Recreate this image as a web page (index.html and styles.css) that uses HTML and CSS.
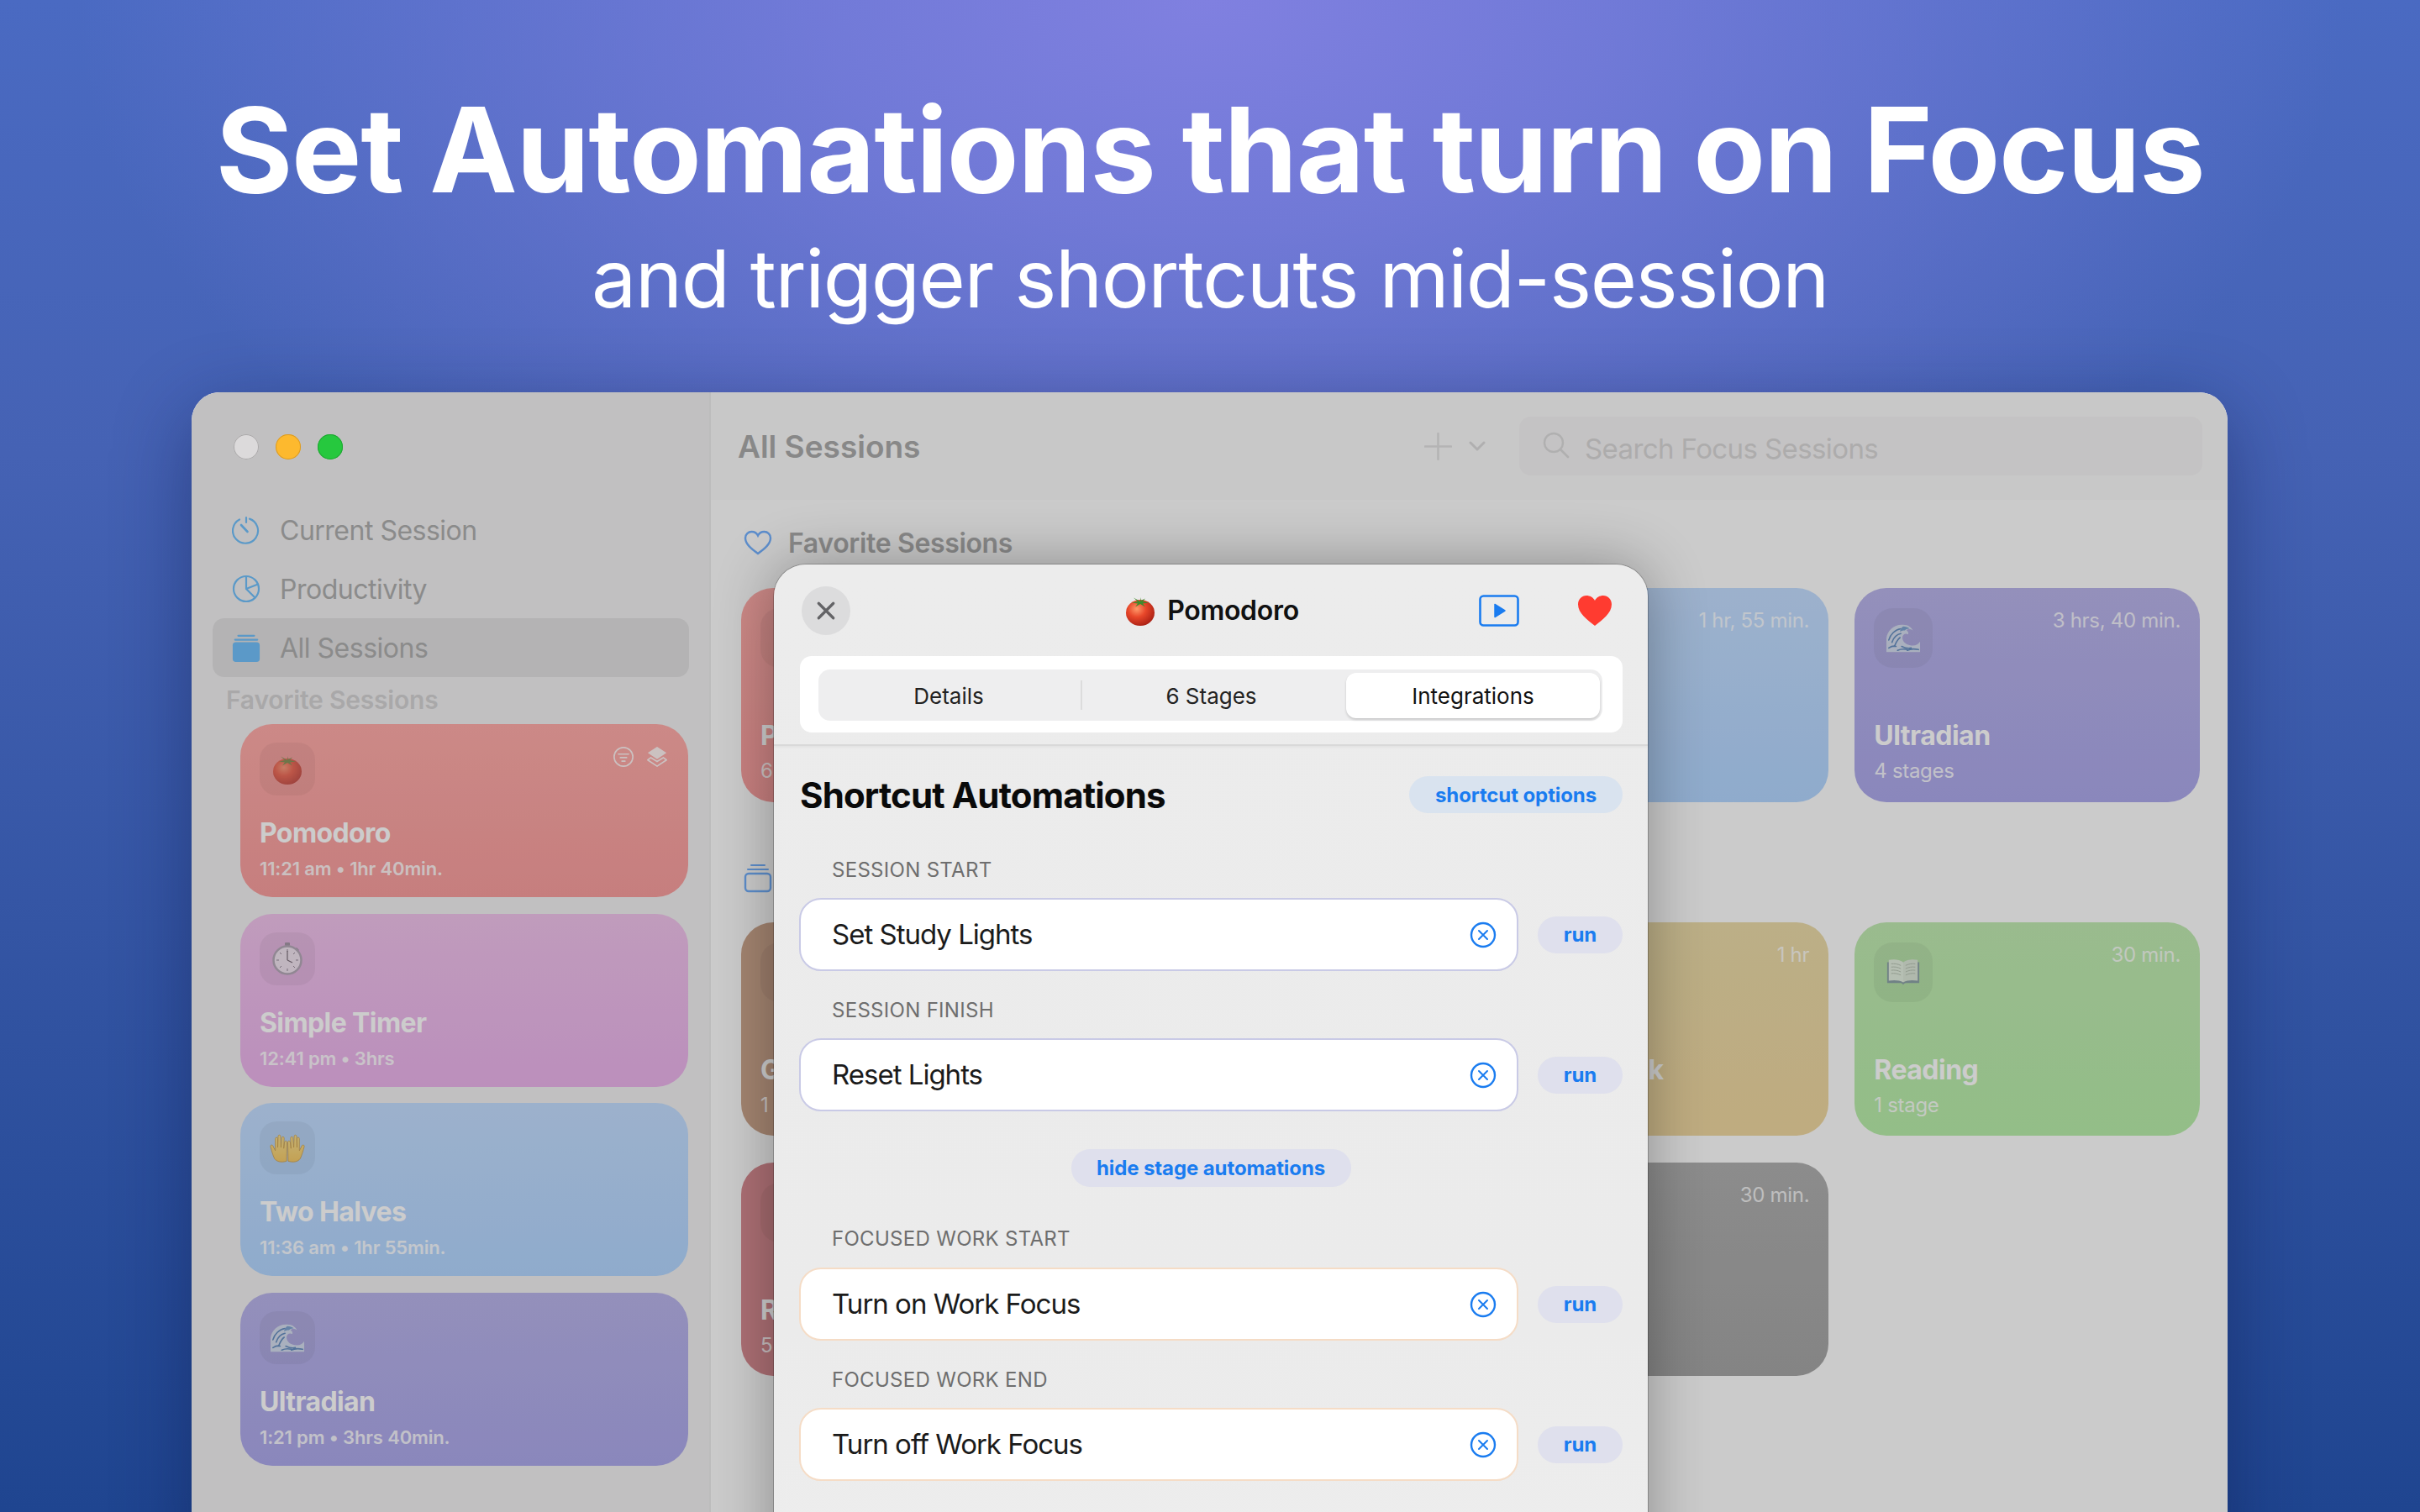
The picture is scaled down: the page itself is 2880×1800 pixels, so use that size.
FILE: index.html
```html
<!DOCTYPE html>
<html lang="en">
<head>
<meta charset="utf-8">
<title>Set Automations that turn on Focus</title>
<link rel="stylesheet" href="styles.css">
</head>
<body>
<svg class="defs" width="0" height="0" aria-hidden="true">
  <defs>
    <radialGradient id="gTomato" cx="38%" cy="35%" r="70%">
      <stop offset="0" stop-color="#ff9a6a"/><stop offset=".45" stop-color="#e8472a"/><stop offset="1" stop-color="#a81f14"/>
    </radialGradient>
    <linearGradient id="gHand" x1="0" y1="0" x2="0" y2="1">
      <stop offset="0" stop-color="#ffe288"/><stop offset="1" stop-color="#fbc95a"/>
    </linearGradient>
    <symbol id="tomato" viewBox="0 0 40 40">
      <ellipse cx="20" cy="22.500" rx="17" ry="15.500" fill="url(#gTomato)"/>
      <path d="M20 9 12 4.500l5 4.500-7 1.500 7 1 -3 4 6-3.500 6 3.500-3-4 7-1-7-1.500 3-3.500-5 2.500-.5-4z" fill="#3f8a2c"/>
    </symbol>
    <symbol id="stopwatch" viewBox="0 0 40 40">
      <rect x="17" y="1" width="6" height="4" rx="1" fill="#8d8d92"/>
      <rect x="19" y="4" width="2" height="4" fill="#8d8d92"/>
      <path d="m31 7 3 3-2 2-3-3z" fill="#8d8d92"/>
      <circle cx="20" cy="22" r="16.500" fill="#f6f6f6" stroke="#a5a5aa" stroke-width="2.500"/>
      <path d="M20 9v3M20 32v3M7 22h3M30 22h3M11 13l2 2M29 13l-2 2M11 31l2-2M29 31l-2-2" stroke="#77777c" stroke-width="1"/>
      <path d="M20 22V11M20 22l6 3" stroke="#555" stroke-width="1.200" fill="none"/>
    </symbol>
    <symbol id="hands" viewBox="0 0 44 40">
      <path d="M21 36c-6 2-12 1-15-3-2-4-4-11-5-15-.5-2 2-3 3-1l3 6 0-15c0-2 3-2 3 0v11l.5-14c0-2 3-2 3 0l.5 14 1-12c.3-2 3-1.800 3 .2l-.5 13 1-8c.3-2 3-1.700 3 .3z" fill="url(#gHand)" stroke="#cf9a3c" stroke-width=".8"/>
      <path d="M23 36c6 2 12 1 15-3 2-4 4-11 5-15 .5-2-2-3-3-1l-3 6 0-15c0-2-3-2-3 0v11l-.5-14c0-2-3-2-3 0l-.5 14-1-12c-.3-2-3-1.800-3 .2l.5 13-1-8c-.3-2-3-1.700-3 .3z" fill="url(#gHand)" stroke="#cf9a3c" stroke-width=".8"/>
    </symbol>
    <symbol id="wave" viewBox="0 0 44 38">
      <path d="M1 37V20C2 10 11 2 22 3c6 0 10 3 12 7-3-2-6-2-8 0 2 1 3 3 2 5-3-2-7 0-7 4 0 6 6 10 13 10 4 0 7-2 9-5v13z" fill="#e4f0f4"/>
      <path d="M4 22c2-7 8-13 15-14M8 25c2-6 6-10 11-11M11 30c2-5 4-9 7-11M4 32c3-2 6-3 9-2M15 35c4-2 8-2 12-1M27 35c4-2 9-2 14-1M20 30c4 2 8 3 12 2" stroke="#4e86b6" stroke-width="1.700" fill="none" stroke-linecap="round"/>
      <path d="M22 5c3 0 6 1 8 3-2 0-4 0-6 2-2 0-4 0-6 2 0-3 2-6 4-7z" fill="#6da2cc"/>
    </symbol>
    <symbol id="book" viewBox="0 0 44 36">
      <path d="M2 6v26h17c1 0 2 1 3 2 1-1 2-2 3-2h17V6z" fill="#7f8ca8"/>
      <path d="M4 3c6-1 13-1 18 3v25c-5-3-12-3-18-2z" fill="#f6f6f6"/>
      <path d="M40 3c-6-1-13-1-18 3v25c5-3 12-3 18-2z" fill="#ececec"/>
      <path d="M7 8c4-.5 8 0 12 2M7 12c4-.5 8 0 12 2M7 16c4-.5 8 0 12 2M7 20c4-.5 8 0 12 2M37 8c-4-.5-8 0-12 2M37 12c-4-.5-8 0-12 2M37 16c-4-.5-8 0-12 2M37 20c-4-.5-8 0-12 2" stroke="#b5b5b5" stroke-width="1" fill="none"/>
    </symbol>
    <symbol id="clear" viewBox="0 0 32 32">
      <circle cx="16" cy="16" r="14" fill="none" stroke="#1a7cf0" stroke-width="2.400"/>
      <path d="m11 11 10 10M21 11 11 21" stroke="#1a7cf0" stroke-width="2" stroke-linecap="round"/>
    </symbol>
  </defs>
</svg>

<header class="hero">
  <h1 class="hero-title">Set Automations that turn on Focus</h1>
  <p class="hero-sub">and trigger shortcuts mid-session</p>
</header>

<section class="window">
  <aside class="sidebar">
    <div class="lights">
      <span class="light light-grey"></span>
      <span class="light light-amber"></span>
      <span class="light light-green"></span>
    </div>
    <nav class="nav">
      <a class="nav-item">
        <svg class="nav-icon" viewBox="0 0 34 34"><path d="M21 3.600A15 15 0 1 1 9 4.500" fill="none" stroke="#72c0fa" stroke-width="2.200" stroke-linecap="round"/><path d="M17 2v6" stroke="#72c0fa" stroke-width="2.200" stroke-linecap="round"/><path d="M18.500 19 11 11" stroke="#72c0fa" stroke-width="2.600" stroke-linecap="round"/></svg>
        <span>Current Session</span>
      </a>
      <a class="nav-item">
        <svg class="nav-icon" viewBox="0 0 34 34"><circle cx="17" cy="17" r="15" fill="none" stroke="#72c0fa" stroke-width="2.200"/><path d="M17 2v15l10.500 10.500M17 17l14-5.500" fill="none" stroke="#72c0fa" stroke-width="2.200"/></svg>
        <span>Productivity</span>
      </a>
      <a class="nav-item nav-item-active">
        <svg class="nav-icon" viewBox="0 0 34 36"><rect x="0" y="11" width="34" height="25" rx="4" fill="#72c0fa"/><path d="M3 8h28M7 3h20" stroke="#72c0fa" stroke-width="2.400" stroke-linecap="round"/></svg>
        <span>All Sessions</span>
      </a>
    </nav>
    <h2 class="side-label">Favorite Sessions</h2>
    <div class="side-cards">
      <article class="side-card card-red">
        <div class="side-card-top">
          <span class="side-tile"><svg class="emoji emoji-soft"><use href="#tomato"/></svg></span>
          <span class="badges">
            <svg class="badge" viewBox="0 0 28 28"><circle cx="14" cy="14" r="12" fill="none" stroke="#fff" stroke-width="1.800"/><path d="M7.500 10.500h13M10 15h8M12 19.500h4" stroke="#fff" stroke-width="1.800" stroke-linecap="round"/></svg>
            <svg class="badge" viewBox="0 0 28 28"><path d="M14 1 26 9l-12 8L2 9z" fill="#fff"/><path d="M6 15 2 18l12 8 12-8-4-3-8 5z" fill="none" stroke="#fff" stroke-width="1.800" stroke-linejoin="round"/></svg>
          </span>
        </div>
        <h3 class="side-title">Pomodoro</h3>
        <p class="side-sub">11:21 am • 1hr 40min.</p>
      </article>
      <article class="side-card card-pink">
        <div class="side-card-top"><span class="side-tile"><svg class="emoji"><use href="#stopwatch"/></svg></span></div>
        <h3 class="side-title">Simple Timer</h3>
        <p class="side-sub">12:41 pm • 3hrs</p>
      </article>
      <article class="side-card card-blue">
        <div class="side-card-top"><span class="side-tile"><svg class="emoji emoji-full"><use href="#hands"/></svg></span></div>
        <h3 class="side-title">Two Halves</h3>
        <p class="side-sub">11:36 am • 1hr 55min.</p>
      </article>
      <article class="side-card card-purple">
        <div class="side-card-top"><span class="side-tile"><svg class="emoji"><use href="#wave"/></svg></span></div>
        <h3 class="side-title">Ultradian</h3>
        <p class="side-sub">1:21 pm • 3hrs 40min.</p>
      </article>
    </div>
  </aside>

  <main class="main">
    <div class="toolbar">
      <h2 class="toolbar-title">All Sessions</h2>
      <svg class="tool-plus" viewBox="0 0 34 34"><path d="M17 1v32M1 17h32" stroke="#e2e1e2" stroke-width="2.600" stroke-linecap="round"/></svg>
      <svg class="tool-chev" viewBox="0 0 20 12"><path d="m2 2 8 8 8-8" fill="none" stroke="#dcdbdc" stroke-width="3" stroke-linecap="round" stroke-linejoin="round"/></svg>
      <div class="search">
        <svg class="search-icon" viewBox="0 0 32 32"><circle cx="13" cy="13" r="11" fill="none" stroke="#dddcdd" stroke-width="2.400"/><path d="m21 21 9 9" stroke="#dddcdd" stroke-width="2.800" stroke-linecap="round"/></svg>
        <span class="search-text">Search Focus Sessions</span>
      </div>
    </div>
    <div class="content">
      <div class="section-head">
        <svg class="section-icon" viewBox="0 0 34 30"><path d="M17 28C10 23 2 17 2 9.500 2 5 5.500 2 9.500 2c3 0 6 1.500 7.500 4.500C18.500 3.500 21.500 2 24.500 2 28.500 2 32 5 32 9.500 32 17 24 23 17 28z" fill="none" stroke="#75b2ff" stroke-width="2.400"/></svg>
        <span class="section-title">Favorite Sessions</span>
      </div>
      <div class="grid">
        <article class="card card-red">
          <span class="tile"></span>
          <h3 class="card-title">P</h3>
          <p class="card-sub">6</p>
        </article>
        <article class="card card-pink"></article>
        <article class="card card-blue">
          <span class="card-time">1 hr, 55 min.</span>
        </article>
        <article class="card card-purple">
          <span class="tile"><svg class="emoji"><use href="#wave"/></svg></span>
          <span class="card-time">3 hrs, 40 min.</span>
          <h3 class="card-title">Ultradian</h3>
          <p class="card-sub">4 stages</p>
        </article>
      </div>
      <div class="section-head section-head-next">
        <svg class="section-icon section-icon-stack" viewBox="0 0 34 36"><rect x="2" y="13" width="30" height="21" rx="4" fill="none" stroke="#75b2ff" stroke-width="2.400"/><path d="M5 8h24M9 3h16" stroke="#75b2ff" stroke-width="2" stroke-linecap="round"/></svg>
      </div>
      <div class="grid grid-tall">
        <article class="card card-brown">
          <span class="tile"></span>
          <h3 class="card-title">G</h3>
          <p class="card-sub">1</p>
        </article>
        <article class="card card-pink"></article>
        <article class="card card-tan">
          <span class="card-time">1 hr</span>
          <h3 class="card-title card-title-tail">k</h3>
        </article>
        <article class="card card-green">
          <span class="tile"><svg class="emoji"><use href="#book"/></svg></span>
          <span class="card-time">30 min.</span>
          <h3 class="card-title">Reading</h3>
          <p class="card-sub">1 stage</p>
        </article>
        <article class="card card-rose">
          <span class="tile"></span>
          <h3 class="card-title">R</h3>
          <p class="card-sub">5</p>
        </article>
        <article class="card card-pink"></article>
        <article class="card card-grey">
          <span class="card-time">30 min.</span>
        </article>
      </div>
    </div>
  </main>

  <div class="scrim"></div>

  <div class="modal">
    <div class="modal-head">
      <button class="close"><svg viewBox="0 0 22 22"><path d="m3 3 16 16M19 3 3 19" stroke="#636366" stroke-width="3" stroke-linecap="round"/></svg></button>
      <div class="modal-name"><svg class="modal-emoji"><use href="#tomato"/></svg><span>Pomodoro</span></div>
      <div class="modal-actions">
        <svg class="play" viewBox="0 0 48 38"><rect x="1.500" y="1.500" width="45" height="35" rx="4" fill="none" stroke="#1a7cf0" stroke-width="2.600"/><path d="M19 11.500v15L31 19z" fill="#1a7cf0" stroke="#1a7cf0" stroke-width="1.500" stroke-linejoin="round"/></svg>
        <svg class="heart" viewBox="0 0 42 38"><path d="M21 37C12 30 1 22 1 11.500 1 5.500 5.500 1 11 1c4 0 8 2 10 6 2-4 6-6 10-6 5.500 0 10 4.500 10 10.500C41 22 30 30 21 37z" fill="#ff3b30"/></svg>
      </div>
    </div>
    <div class="tabs-wrap">
      <div class="tabs-panel">
        <div class="tabs">
          <span class="tab">Details</span>
          <span class="tab tab-divided">6 Stages</span>
          <span class="tab tab-active">Integrations</span>
        </div>
      </div>
    </div>
    <div class="modal-body">
      <div class="title-row">
        <h2 class="auto-title">Shortcut Automations</h2>
        <span class="chip chip-options">shortcut options</span>
      </div>

      <p class="label label-first">SESSION START</p>
      <div class="row">
        <div class="field field-session"><span>Set Study Lights</span><svg class="clear"><use href="#clear"/></svg></div>
        <span class="chip chip-run">run</span>
      </div>
      <p class="label">SESSION FINISH</p>
      <div class="row">
        <div class="field field-session"><span>Reset Lights</span><svg class="clear"><use href="#clear"/></svg></div>
        <span class="chip chip-run">run</span>
      </div>

      <div class="hide-row"><span class="chip chip-hide">hide stage automations</span></div>

      <p class="label label-stage">FOCUSED WORK START</p>
      <div class="row">
        <div class="field field-stage"><span>Turn on Work Focus</span><svg class="clear"><use href="#clear"/></svg></div>
        <span class="chip chip-run">run</span>
      </div>
      <p class="label">FOCUSED WORK END</p>
      <div class="row">
        <div class="field field-stage"><span>Turn off Work Focus</span><svg class="clear"><use href="#clear"/></svg></div>
        <span class="chip chip-run">run</span>
      </div>
    </div>
  </div>
</section>
</body>
</html>
```

FILE: styles.css
```css
* { box-sizing: border-box; }
html, body { margin: 0; padding: 0; }
body {
  width: 2880px;
  height: 1800px;
  overflow: hidden;
  font-family: Inter, "Liberation Sans", sans-serif;
  background:
    radial-gradient(ellipse 1350px 800px at 50% 0, rgba(128,128,224,1) 0, rgba(128,128,224,.72) 35%, rgba(128,128,224,0) 100%),
    linear-gradient(180deg, #4a6ac2 0, #4562b4 30%, #1f4590 100%);
}
.defs { position: absolute; }
h1, h2, h3, p { margin: 0; font-weight: inherit; }

.hero { height: 467px; padding-top: 95px; text-align: center; color: #fff; }
.hero-title { font-size: 140px; line-height: 166px; font-weight: 700; letter-spacing: -1.250px; }
.hero-sub { font-size: 95px; line-height: 114px; margin-top: 14px; letter-spacing: -1.400px; }

.window {
  position: relative;
  display: flex;
  width: 2423px;
  height: 1400px;
  margin-left: 228px;
  border-radius: 34px 34px 0 0;
  overflow: hidden;
  background: #fefefe;
  box-shadow: 0 24px 90px rgba(12,22,70,.42);
}
.scrim { position: absolute; inset: 0; background: rgba(0,0,0,.2); }

.sidebar { width: 618px; flex: none; background: #f2f1f2; border-right: 2px solid #ecebec; padding-top: 50px; }
.lights { position: relative; z-index: 1; display: flex; gap: 20px; padding-left: 50px; }
.light { width: 30px; height: 30px; border-radius: 50%; }
.light-grey { background: #dcdadb; box-shadow: inset 0 0 0 1px #aaa8a9; }
.light-amber { background: #fdb92e; box-shadow: inset 0 0 0 1px #d99a25; }
.light-green { background: #26c83e; box-shadow: inset 0 0 0 1px #1ea531; }
.nav { margin: 49px 24px 0 25px; }
.nav-item { display: flex; align-items: center; gap: 23px; height: 70px; padding-left: 23px; border-radius: 14px; color: #aeaeae; font-size: 32px; letter-spacing: -.5px; }
.nav-item-active { background: #e1e0e1; }
.nav-icon { width: 34px; height: 34px; flex: none; }
.side-label { margin: 9px 0 11px 41px; font-size: 30px; line-height: 36px; font-weight: 600; letter-spacing: -.2px; color: #d4d3d4; }
.side-cards { display: flex; flex-direction: column; gap: 19.500px; margin: 0 25px 0 58px; }
.side-card { height: 206px; padding: 22px 23px; border-radius: 38px; color: #fff; }
.side-card-top { display: flex; justify-content: space-between; align-items: flex-start; }
.side-tile { display: flex; align-items: center; justify-content: center; width: 66px; height: 63px; border-radius: 20px; background: rgba(0,0,0,.045); }
.emoji { width: 42px; height: 40px; opacity: .72; }
.emoji-soft { opacity: .58; }
.emoji-full { opacity: .9; }
.badges { display: flex; gap: 14px; margin: 4px 1px 0 0; }
.badge { width: 26px; height: 26px; opacity: .85; }
.side-title { margin-top: 25px; font-size: 32px; line-height: 40px; font-weight: 700; letter-spacing: -.6px; }
.side-sub { margin-top: 8px; font-size: 22px; line-height: 28px; font-weight: 600; letter-spacing: -.15px; opacity: .85; }

.card-red { background: linear-gradient(180deg, #ffaca9, #f89e9e); }
.card-pink { background: linear-gradient(180deg, #f0c3eb, #ebb3eb); }
.card-blue { background: linear-gradient(180deg, #c4deff, #b3d6ff); }
.card-purple { background: linear-gradient(180deg, #b9b4ea, #ada9eb); }
.card-tan { background: linear-gradient(180deg, #ebdba9, #efd7a0); }
.card-green { background: linear-gradient(180deg, #c1eab2, #b8eeaa); }
.card-grey { background: linear-gradient(180deg, #afafaf, #a6a6a6); }
.card-brown { background: #cca58d; }
.card-rose { background: #d88b91; }

.main { flex: 1; min-width: 0; }
.toolbar { display: flex; align-items: center; height: 128px; padding: 0 30px 0 32px; background: #fafafa; }
.toolbar-title { width: 817px; flex: none; font-size: 37px; font-weight: 600; color: #aaa; }
.tool-plus { width: 33px; height: 33px; flex: none; }
.tool-chev { width: 20px; height: 12px; margin: 0 40px 0 20px; flex: none; }
.search { display: flex; align-items: center; flex: 1; height: 70px; padding-left: 28px; border-radius: 14px; background: #f6f4f5; }
.search-icon { width: 32px; height: 32px; flex: none; margin-top: -2px; }
.search-text { margin: 6px 0 0 18px; font-size: 33px; letter-spacing: -.6px; color: #d9d7d8; }

.content { padding: 31px 33px 0 36px; }
.section-head { display: flex; align-items: center; gap: 19px; height: 40px; margin-bottom: 34px; padding-left: 3px; }
.section-head-next { margin-top: 72px; margin-bottom: 31px; }
.section-icon { width: 34px; height: 30px; flex: none; }
.section-icon-stack { height: 36px; margin-top: -4px; }
.section-title { font-size: 32px; font-weight: 600; letter-spacing: -.35px; color: #adadad; }
.grid { display: grid; grid-template-columns: repeat(4, 1fr); gap: 32px 31px; }
.card { position: relative; height: 255px; padding: 24px 24px 24px 23px; border-radius: 38px; color: #fff; }
.grid-tall .card { height: 254px; }
.tile { display: block; width: 70px; height: 71px; padding-top: 15px; padding-left: 14px; border-radius: 22px; background: rgba(0,0,0,.045); }
.card-time { position: absolute; top: 24px; right: 23px; font-size: 24px; line-height: 30px; letter-spacing: -.3px; opacity: .8; }
.card-title { margin-top: 61px; font-size: 32px; line-height: 40px; font-weight: 700; letter-spacing: -.5px; white-space: nowrap; }
.card-title-tail { margin: 132px 0 0 173px; }
.card-sub { margin-top: 7px; font-size: 24px; line-height: 30px; letter-spacing: -.3px; opacity: .85; }

.modal {
  position: absolute;
  left: 693px;
  top: 205px;
  width: 1040px;
  height: 1300px;
  border-radius: 38px 38px 0 0;
  background: linear-gradient(180deg, #ececec 0, #ebebeb 70%, #eeeeee 100%);
  box-shadow: 0 0 0 1px rgba(0,0,0,.22), 0 0 70px rgba(0,0,0,.32);
}
.modal-head { display: grid; grid-template-columns: 1fr auto 1fr; align-items: center; height: 109px; padding: 0 32px 0 33px; }
.close { display: flex; align-items: center; justify-content: center; width: 58px; height: 58px; padding: 0; border: 0; border-radius: 50%; background: #dcdcdd; }
.close svg { width: 24px; height: 24px; }
.modal-name { display: flex; align-items: center; gap: 12px; font-size: 32px; font-weight: 600; letter-spacing: -.3px; color: #111; }
.modal-emoji { width: 40px; height: 40px; }
.modal-actions { display: flex; justify-content: flex-end; align-items: center; gap: 69px; padding-right: 10px; }
.play { width: 48px; height: 38px; }
.heart { width: 42px; height: 38px; }

.tabs-wrap { height: 107px; padding: 0 30px 0 31px; border-bottom: 2px solid #d9d9d9; box-shadow: 0 2px 3px rgba(0,0,0,.04); }
.tabs-panel { height: 91px; padding: 16px 24px 14px 22px; border-radius: 14px; background: #fff; }
.tabs { display: grid; grid-template-columns: 304px 321px 302px; align-items: center; height: 61px; padding: 4px 3px; border-radius: 14px; background: #eeeeef; }
.tab { display: flex; align-items: center; justify-content: center; height: 54px; font-size: 26px; color: #222; }
.tab-divided { position: relative; }
.tab-divided::before { content: ""; position: absolute; left: 5px; top: 9px; height: 35px; width: 2px; background: #dcdcdc; }
.tab-active { background: #fff; border-radius: 12px; color: #111; box-shadow: 0 2px 3px rgba(0,0,0,.16); }

.modal-body { padding: 36px 30px 0 30px; }
.title-row { display: flex; align-items: center; justify-content: space-between; height: 44px; padding-left: 1px; }
.auto-title { font-size: 42px; font-weight: 700; letter-spacing: -.85px; color: #0a0a0a; }
.chip { display: inline-flex; align-items: center; justify-content: center; height: 44px; border-radius: 22px; font-size: 24px; font-weight: 700; letter-spacing: -.1px; color: #1a7cf0; }
.chip-options { width: 254px; background: #d9e3ef; }
.chip-run { width: 101px; flex: none; background: #dfe0ed; }
.chip-hide { width: 333px; height: 45px; background: #dfe0ed; }
.label { margin: 32px 0 18px 39px; font-size: 24px; line-height: 30px; letter-spacing: .3px; color: #6e6e6e; }
.label-first { margin-top: 53px; }
.label-stage { margin-top: 47px; margin-bottom: 19px; }
.row { display: flex; align-items: center; gap: 23px; }
.field { display: flex; align-items: center; justify-content: space-between; flex: 1; height: 87px; padding: 0 24px 0 37px; border-radius: 26px; border: 2px solid; background: #fff; font-size: 33px; letter-spacing: -1px; color: #1b1b1b; }
.field span { margin-top: -2px; }
.field-session { border-color: #c9cae6; }
.field-stage { border-color: #f5dcc6; }
.clear { width: 32px; height: 32px; flex: none; }
.hide-row { display: flex; justify-content: center; margin-top: 45px; }
```
